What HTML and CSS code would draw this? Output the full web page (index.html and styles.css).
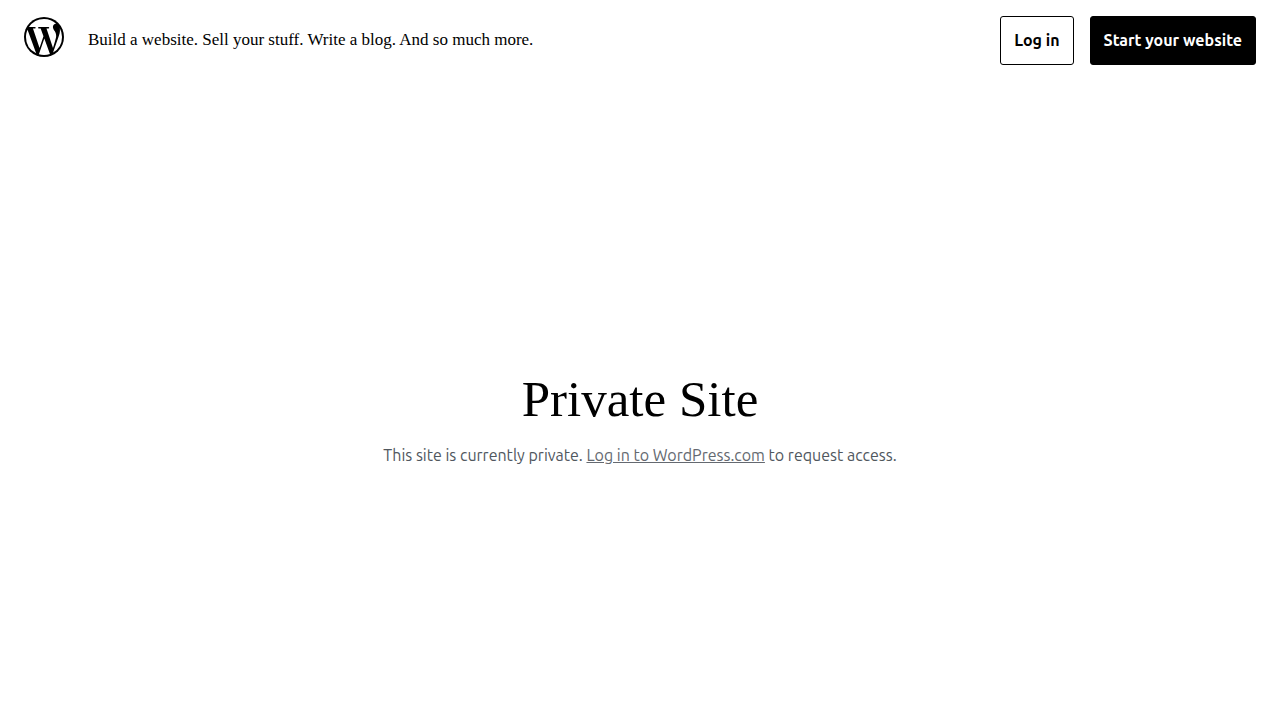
FILE: index.html
```html
<!DOCTYPE html>
<html lang="en">
<head>
    <meta charset="utf-8">
    <meta name="viewport" content="width=device-width, initial-scale=1">
    <title>Private Site</title>
    <link rel="stylesheet" href="styles.css">
</head>
<body>
<header class="site-header">
    <a class="logo" href="#" aria-label="WordPress.com">
        <svg width="40" height="40" viewBox="2 2 20 20" aria-hidden="true">
            <circle cx="12" cy="12" r="10"/>
            <g fill="#fff" transform="translate(12 12) scale(1.06) translate(-12 -12)">
                <path d="M3.5 12c0-1.232.264-2.402.736-3.459L8.291 19.65A8.5 8.5 0 0 1 3.5 12z"/>
                <path d="M12 20.501c-.834 0-1.64-.122-2.401-.346l2.551-7.411 2.613 7.158a.718.718 0 0 0 .061.117A8.497 8.497 0 0 1 12 20.501z"/>
                <path d="M13.172 8.015c.512-.027.973-.081.973-.081.458-.054.404-.727-.054-.701 0 0-1.377.108-2.266.108-.835 0-2.239-.108-2.239-.108-.459-.026-.512.674-.054.701 0 0 .434.054.892.081l1.324 3.629-1.86 5.579-3.096-9.208c.512-.027.973-.081.973-.081.458-.054.403-.727-.055-.701 0 0-1.376.108-2.265.108-.16 0-.347-.004-.547-.01A8.491 8.491 0 0 1 12 3.5c2.213 0 4.228.846 5.74 2.232-.037-.002-.072-.007-.11-.007-.835 0-1.427.727-1.427 1.509 0 .701.404 1.293.835 1.994.323.566.701 1.293.701 2.344 0 .727-.28 1.572-.647 2.748l-.848 2.833-3.072-9.138z"/>
                <path d="M16.273 19.347l2.596-7.506c.485-1.213.646-2.182.646-3.045 0-.313-.021-.603-.057-.874A8.455 8.455 0 0 1 20.5 12a8.493 8.493 0 0 1-4.227 7.347z"/>
            </g>
        </svg>
    </a>
    <p class="tagline">Build a website. Sell your stuff. Write a blog. And so much more.</p>
    <div class="actions">
        <button class="button" type="button">Log in</button>
        <button class="button button-primary" type="button">Start your website</button>
    </div>
</header>
<main class="content">
    <h1>Private Site</h1>
    <p>This site is currently private. <a href="#">Log in to WordPress.com</a> to request access.</p>
</main>
</body>
</html>
```
FILE: styles.css
```css
body {
    display: flex;
    flex-direction: column;
    min-height: 100vh;
    margin: 0;
    background: #fff;
    color: #000;
    font-family: Ubuntu, "Noto Sans", sans-serif;
}

.site-header {
    display: flex;
    align-items: center;
    padding: 16px 24px;
}

.logo {
    height: 40px;
    margin: 0 24px 7px 0;
}

.tagline {
    margin: 0 0 2px;
    font-family: Recoleta, "Liberation Serif", serif;
    font-size: 17px;
    line-height: 24px;
}

.actions {
    display: flex;
    gap: 16px;
    margin-left: auto;
}

.button {
    padding: 12px 13px;
    border: 1px solid #000;
    border-radius: 3px;
    background: #fff;
    color: #000;
    font-family: inherit;
    font-size: 16px;
    font-weight: 600;
    line-height: 23px;
    cursor: pointer;
}

.button-primary {
    background: #000;
    color: #fff;
}

.content {
    display: flex;
    flex: 1;
    flex-direction: column;
    align-items: center;
    justify-content: center;
    padding: 36px 24px 0;
    text-align: center;
}

.content h1 {
    margin: 0 0 16px;
    font-family: Recoleta, "Liberation Serif", serif;
    font-size: 51px;
    font-weight: 400;
    line-height: 56px;
}

.content p {
    margin: 0;
    color: #50575e;
    font-size: 16px;
    line-height: 24px;
}

.content a {
    color: #646970;
}
```
